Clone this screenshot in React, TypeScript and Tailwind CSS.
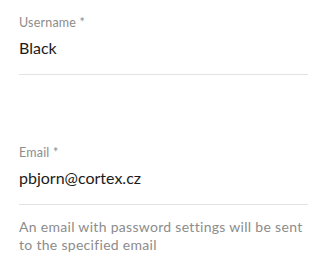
export default function App() {
  return (
    <div className="w-[318px] h-[257px] bg-white pl-[19px] pr-[10px] pt-[15px] font-['Lato',sans-serif]">
      <div className="flex flex-col">
        <label className="text-[12.5px] leading-[16px] tracking-[0.2px] text-[#8c8c8c]">Username *</label>
        <div className="mt-[6px] text-[16px] leading-[22px] text-[#1b1b1b]">Black</div>
        <div className="mt-[15px] h-px bg-[#e3e3e3]" />
      </div>
      <div className="mt-[70px] flex flex-col">
        <label className="text-[12.5px] leading-[16px] tracking-[0.2px] text-[#8c8c8c]">Email *</label>
        <div className="mt-[6px] text-[16px] leading-[22px] text-[#1b1b1b]">pbjorn@cortex.cz</div>
        <div className="mt-[15px] h-px bg-[#e3e3e3]" />
        <p className="mt-[13px] text-[14px] leading-[18px] tracking-[0.3px] text-[#8c8c8c]">
          An email with password settings will be sent to the specified email
        </p>
      </div>
    </div>
  );
}
